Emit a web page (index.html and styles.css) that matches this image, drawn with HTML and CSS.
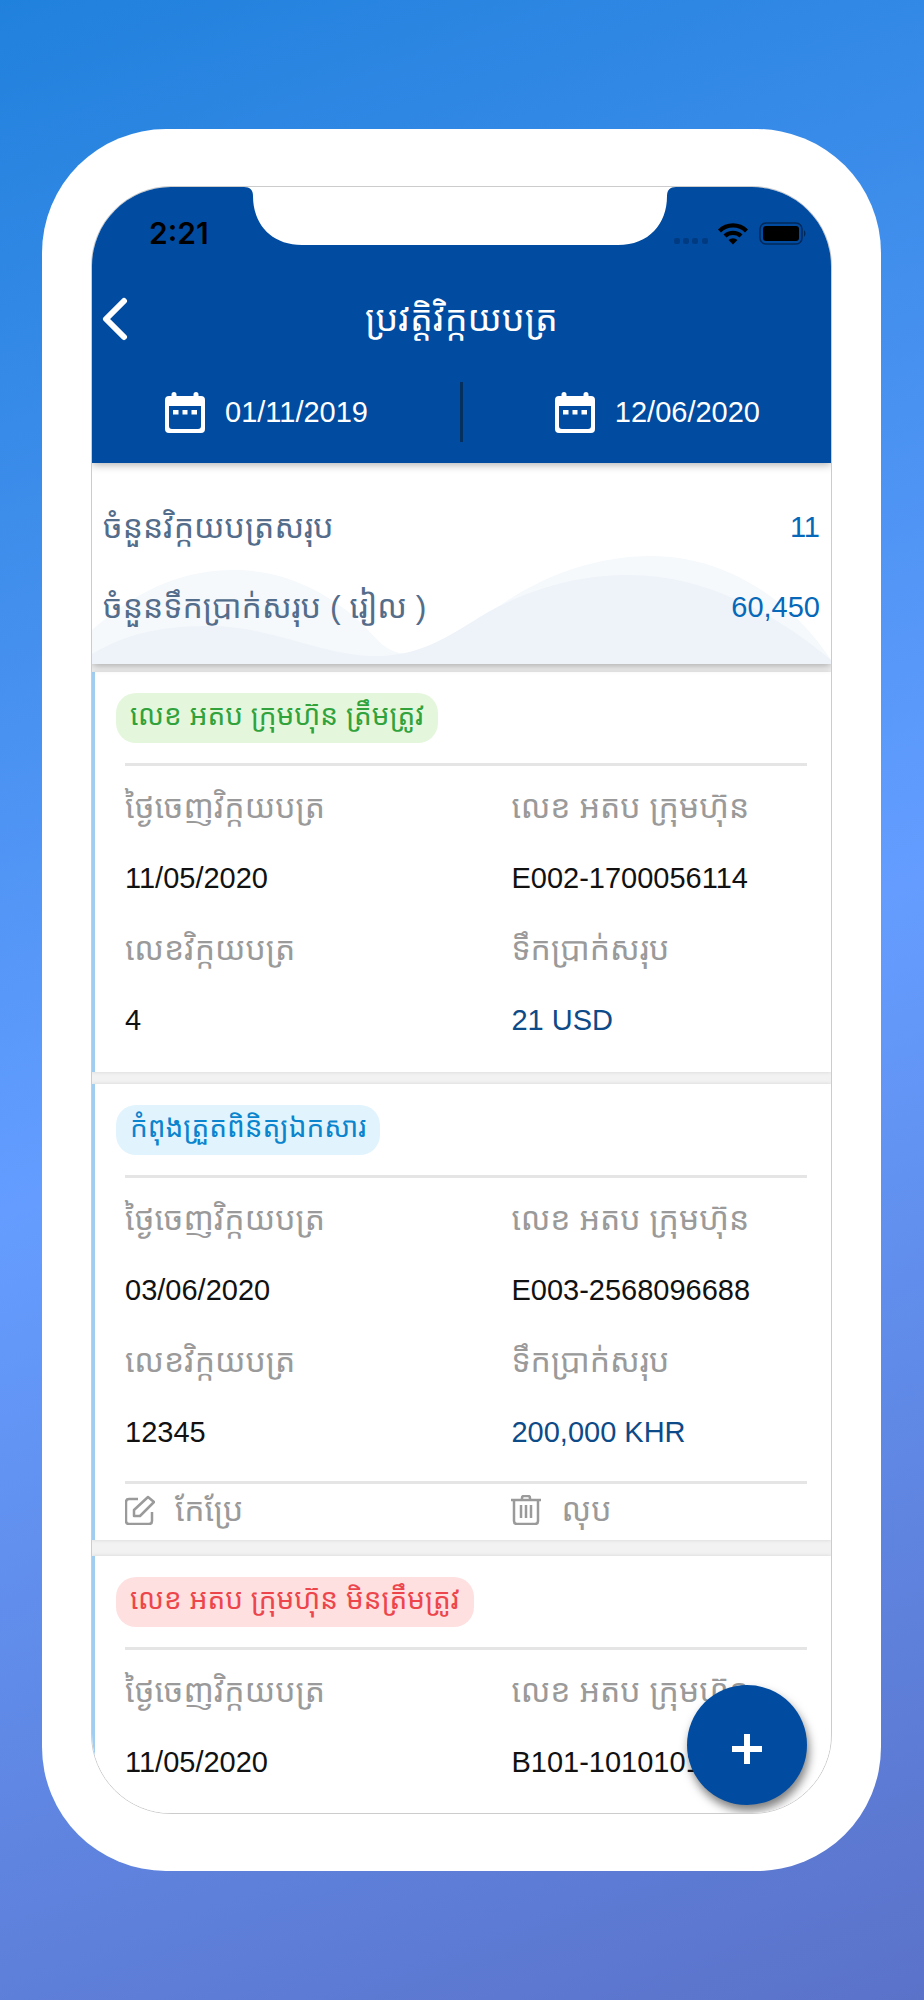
FILE: index.html
```html
<!DOCTYPE html>
<html lang="km">
<head>
    <meta charset="UTF-8">
    <meta name="viewport" content="width=device-width, initial-scale=1">
    <title>ប្រវត្តិវិក្កយបត្រ</title>
    <link rel="stylesheet" href="styles.css">
</head>
<body>
    <div class="phone">
        <div class="screen">
            <svg class="notch" width="432" height="60" viewBox="0 0 432 60">
                <path d="M0 0H432V1C426 1 423 4 423 10C423 38 405 59 374 59H58C27 59 9 38 9 10C9 4 6 1 0 1Z" fill="#fff"/>
            </svg>
            <header class="header">
                <div class="status">
                    <span class="time">2:21</span>
                    <svg class="status-icons" width="136" height="24" viewBox="0 0 136 24">
                        <g fill="#003b82">
                            <rect x="1" y="17" width="6" height="6" rx="2"/>
                            <rect x="10" y="17" width="6" height="6" rx="2"/>
                            <rect x="19" y="17" width="6" height="6" rx="2"/>
                            <rect x="29" y="17" width="6" height="6" rx="2"/>
                        </g>
                        <path d="M45 8.500A21 21 0 0 1 75 8.500L72 11.500A17 17 0 0 0 48 11.500Z"/>
                        <path d="M50.500 13.500A14 14 0 0 1 69.500 13.500L66.500 16.500A10 10 0 0 0 53.500 16.500Z"/>
                        <path d="M55.500 19A7 7 0 0 1 64.500 19L60 23.500Z"/>
                        <rect x="87" y="2" width="42" height="21" rx="6" fill="none" stroke="#00285a" stroke-width="1.500"/>
                        <rect x="90" y="5" width="36" height="15" rx="3"/>
                        <path d="M131 9Q134 12.500 131 16Z" fill="#00285a"/>
                    </svg>
                </div>
                <div class="title-bar">
                    <button class="back" aria-label="Back">
                        <svg width="26" height="44" viewBox="0 0 26 44" fill="none" stroke="#fff" stroke-width="6" stroke-linecap="round" stroke-linejoin="round">
                            <path d="M22 4L4 22L22 40"/>
                        </svg>
                    </button>
                    <h1>ប្រវត្តិវិក្កយបត្រ</h1>
                </div>
                <div class="dates">
                    <button class="date">
                        <svg width="40" height="41" viewBox="0 0 40 41">
                            <path fill="#fff" fill-rule="evenodd" d="M4 4H6.500V2.500Q6.500 0 9 0T11.500 2.500V4H28.500V2.500Q28.500 0 31 0T33.500 2.500V4H36Q40 4 40 8V37Q40 41 36 41H4Q0 41 0 37V8Q0 4 4 4ZM4 14V34Q4 37 7 37H33Q36 37 36 34V14Z"/>
                            <path fill="#fff" d="M8 18H13.500V22.500H8ZM17.500 18H22.500V22.500H17.500ZM26.500 18H32V22.500H26.500Z"/>
                        </svg>
                        <span>01/11/2019</span>
                    </button>
                    <span class="divider"></span>
                    <button class="date">
                        <svg width="40" height="41" viewBox="0 0 40 41">
                            <path fill="#fff" fill-rule="evenodd" d="M4 4H6.500V2.500Q6.500 0 9 0T11.500 2.500V4H28.500V2.500Q28.500 0 31 0T33.500 2.500V4H36Q40 4 40 8V37Q40 41 36 41H4Q0 41 0 37V8Q0 4 4 4ZM4 14V34Q4 37 7 37H33Q36 37 36 34V14Z"/>
                            <path fill="#fff" d="M8 18H13.500V22.500H8ZM17.500 18H22.500V22.500H17.500ZM26.500 18H32V22.500H26.500Z"/>
                        </svg>
                        <span>12/06/2020</span>
                    </button>
                </div>
            </header>

            <section class="summary">
                <svg class="wave" viewBox="0 0 740 108" preserveAspectRatio="none">
                    <path fill="#f5f9fc" d="M0 74C50 30 95 14 142 14C200 14 240 42 262 60C285 80 290 96 315 98C350 88 375 68 408 50C450 20 505 0 560 0C640 0 705 50 740 104V108H0Z"/>
                    <path fill="#eef3fa" d="M0 98C40 74 80 70 118 70C180 70 230 100 285 100C340 100 372 68 408 50C450 30 490 19 538 19C610 19 680 54 740 104V108H0Z"/>
                </svg>
                <div class="summary-row">
                    <span class="total-label">ចំនួនវិក្កយបត្រសរុប</span>
                    <span class="number">11</span>
                </div>
                <div class="summary-row">
                    <span class="total-label">ចំនួនទឹកប្រាក់សរុប ( រៀល )</span>
                    <span class="number">60,450</span>
                </div>
            </section>

            <main class="list">
                <article class="card">
                    <span class="badge green">លេខ អតប ក្រុមហ៊ុន ត្រឹមត្រូវ</span>
                    <div class="info">
                        <div class="label">ថ្ងៃចេញវិក្កយបត្រ</div>
                        <div class="label">លេខ អតប ក្រុមហ៊ុន</div>
                        <div class="value">11/05/2020</div>
                        <div class="value">E002-1700056114</div>
                        <div class="label">លេខវិក្កយបត្រ</div>
                        <div class="label">ទឹកប្រាក់សរុប</div>
                        <div class="value">4</div>
                        <div class="value amount">21 USD</div>
                    </div>
                </article>

                <article class="card editable">
                    <span class="badge blue">កំពុងត្រួតពិនិត្យឯកសារ</span>
                    <div class="info">
                        <div class="label">ថ្ងៃចេញវិក្កយបត្រ</div>
                        <div class="label">លេខ អតប ក្រុមហ៊ុន</div>
                        <div class="value">03/06/2020</div>
                        <div class="value">E003-2568096688</div>
                        <div class="label">លេខវិក្កយបត្រ</div>
                        <div class="label">ទឹកប្រាក់សរុប</div>
                        <div class="value">12345</div>
                        <div class="value amount">200,000 KHR</div>
                    </div>
                    <div class="actions">
                        <button>
                            <svg width="30" height="30" viewBox="0 0 30 30" fill="none" stroke="#9a9a9a" stroke-width="2.500" stroke-linejoin="round">
                                <path d="M13 4H4Q1 4 1 7V26Q1 29 4 29H24Q27 29 27 26V17"/>
                                <path d="M23 2L29 7L15 21H9V15Z"/>
                            </svg>
                            <span>កែប្រែ</span>
                        </button>
                        <button>
                            <svg width="30" height="30" viewBox="0 0 30 30" fill="none" stroke="#9a9a9a" stroke-width="2.500">
                                <path d="M0 5H30M11 5V3Q11 1 13 1H17Q19 1 19 3V5M3 5V26Q3 29 6 29H24Q27 29 27 26V5M10 10V23M15 10V23M20 10V23"/>
                            </svg>
                            <span>លុប</span>
                        </button>
                    </div>
                </article>

                <article class="card">
                    <span class="badge red">លេខ អតប ក្រុមហ៊ុន មិនត្រឹមត្រូវ</span>
                    <div class="info">
                        <div class="label">ថ្ងៃចេញវិក្កយបត្រ</div>
                        <div class="label">លេខ អតប ក្រុមហ៊ុន</div>
                        <div class="value">11/05/2020</div>
                        <div class="value">B101-1010101</div>
                        <div class="label">លេខវិក្កយបត្រ</div>
                        <div class="label">ទឹកប្រាក់សរុប</div>
                    </div>
                </article>
            </main>

            <button class="add" aria-label="Add">
                <svg width="30" height="30" viewBox="0 0 30 30" stroke="#fff" stroke-width="6">
                    <path d="M15 0V30M0 15H30"/>
                </svg>
            </button>
        </div>
    </div>
</body>
</html>
```
FILE: styles.css
```css
*{
    margin: 0;
    padding: 0;
    box-sizing: border-box;
}
body{
    height: 100vh;
    padding: 129px 43px 129px 42px;
    background: linear-gradient(160deg, #2081dc 0%, #649dff 52%, #5b72c9 100%);
    font-family: "Liberation Sans", "Noto Sans Khmer", sans-serif;
    font-size: 29px;
    color: #111;
}
button{
    border: 0;
    background: none;
    font: inherit;
    color: inherit;
    cursor: pointer;
}
svg{
    display: block;
    flex: none;
}
.phone{
    height: 100%;
    padding: 57px 49px;
    background: #fff;
    border-radius: 124px;
}
.screen{
    position: relative;
    height: 100%;
    overflow: hidden;
    border: 1px solid #ccc;
    border-radius: 80px;
    background: #fff;
}
.notch{
    position: absolute;
    top: -1px;
    left: 152px;
    z-index: 3;
}

/* header */
.header{
    position: relative;
    z-index: 2;
    background: #014ca1;
    color: #fff;
    box-shadow: 0 2px 8px rgba(0,0,0,.3);
}
.status{
    display: flex;
    justify-content: space-between;
    align-items: center;
    height: 92px;
    padding: 0 22px 0 57px;
    color: #000;
}
.time{
    font-family: Inter, sans-serif;
    font-size: 30px;
    font-weight: 600;
}
.title-bar{
    display: grid;
    grid-template-columns: 60px 1fr 60px;
    align-items: center;
    height: 80px;
}
.back{
    padding-left: 10px;
}
h1{
    font-size: 36px;
    font-weight: normal;
    line-height: 60px;
    text-align: center;
}
.dates{
    display: flex;
    justify-content: space-between;
    align-items: center;
    height: 104px;
    padding: 2px 71px 0 73px;
}
.date{
    display: flex;
    align-items: center;
    gap: 20px;
}
.divider{
    width: 3px;
    height: 60px;
    background: #04305f;
}

/* totals */
.summary{
    position: relative;
    z-index: 1;
    height: 201px;
    padding: 24px 11px;
    background: #fff;
    color: #536d8b;
    box-shadow: 0 2px 8px rgba(0,0,0,.3);
}
.wave{
    position: absolute;
    left: 0;
    bottom: 0;
    width: 100%;
    height: 108px;
}
.summary-row{
    position: relative;
    display: flex;
    justify-content: space-between;
    height: 80px;
    line-height: 80px;
}
.total-label{
    font-size: 32px;
}
.number{
    color: #0568b8;
}

/* invoices */
.list{
    padding-top: 8px;
    background: #f2f2f2;
}
.card{
    margin-bottom: 12px;
    padding: 21px 24px 16px 21px;
    border-left: 3px solid #a0cdf0;
    background: #fff;
    box-shadow: 0 0 4px rgba(0,0,0,.12);
}
.editable{
    margin-bottom: 16px;
    padding-bottom: 0;
}
.badge{
    display: inline-block;
    height: 50px;
    padding: 0 14px;
    border-radius: 20px;
    font-size: 28px;
    line-height: 46px;
    vertical-align: top;
}
.green{
    background: #e4f7dc;
    color: #31a23c;
}
.blue{
    background: #e1f4fe;
    color: #0a84cd;
}
.red{
    background: #ffe0e0;
    color: #ec464c;
}
.info, .actions{
    display: grid;
    grid-template-columns: 17fr 13fr;
    margin-left: 9px;
    border-top: 3px solid #e5e5e5;
}
.info{
    margin-top: 20px;
    padding-top: 6px;
}
.label, .value{
    height: 71px;
    line-height: 71px;
    white-space: nowrap;
}
.label{
    font-size: 32px;
    color: #9a9a9a;
}
.amount{
    color: #0c4a88;
}
.actions{
    margin-top: 13px;
    color: #9a9a9a;
}
.actions button{
    display: flex;
    align-items: center;
    gap: 20px;
    height: 56px;
    padding-bottom: 4px;
    font-size: 32px;
    line-height: 44px;
}

.add{
    position: absolute;
    right: 24px;
    bottom: 8px;
    z-index: 4;
    display: flex;
    justify-content: center;
    align-items: center;
    width: 120px;
    height: 120px;
    padding-top: 8px;
    border-radius: 50%;
    background: #014ca1;
    box-shadow: 2px 6px 10px rgba(0,0,0,.5);
}
```
